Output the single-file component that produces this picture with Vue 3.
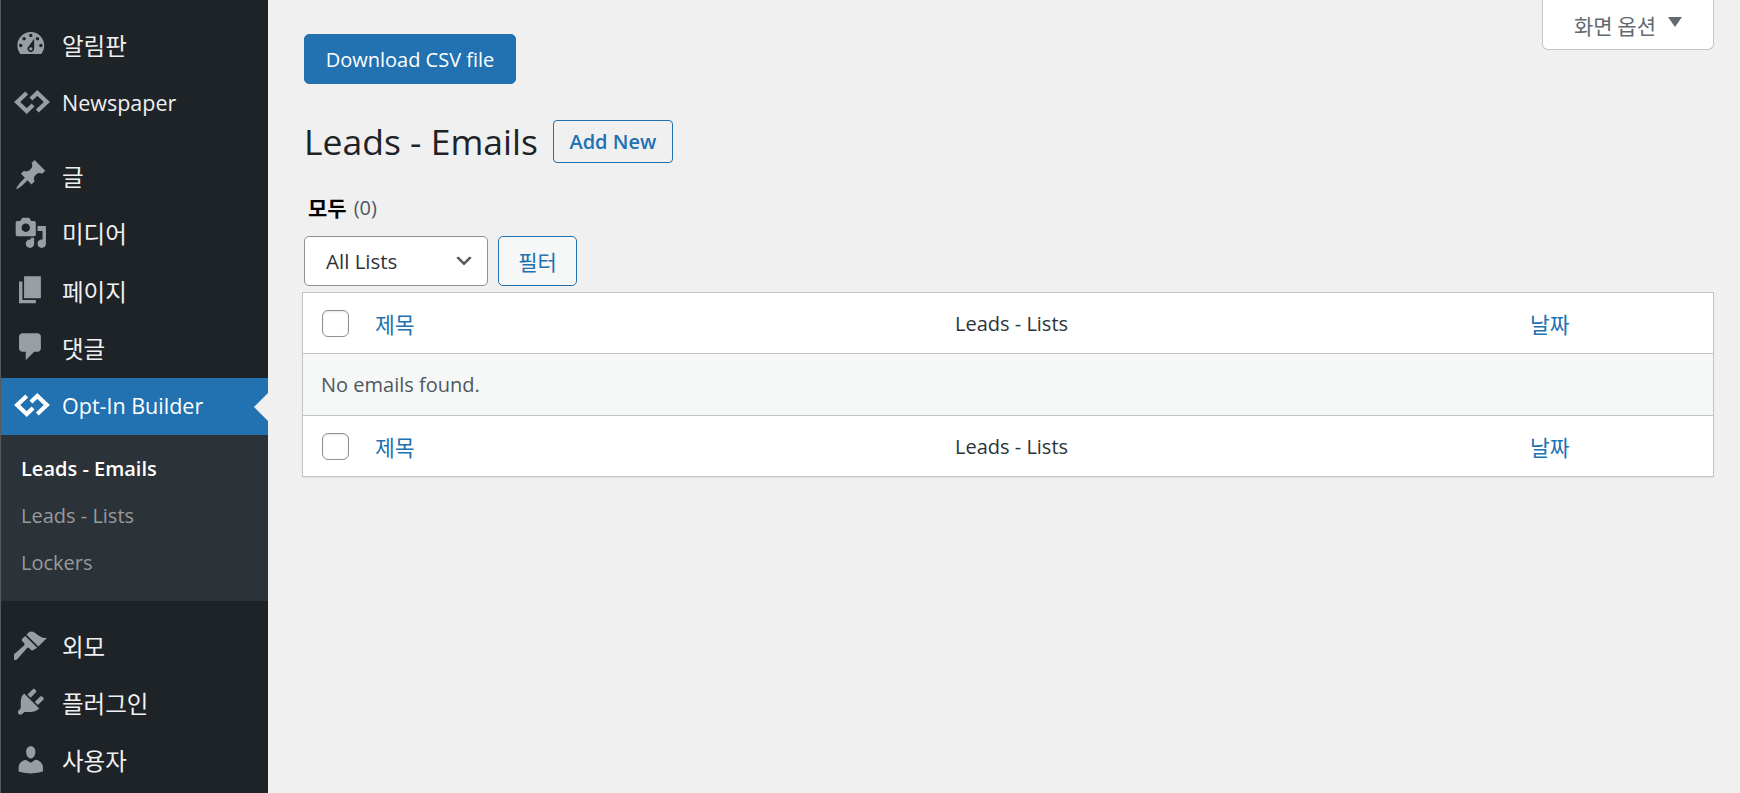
<template>
  <div class="page">
    <aside class="side">
      <ul class="menu">
        <li v-for="item in menuTop" :key="item.label" class="menu-item" :class="item.cls">
          <span class="menu-icon">
            <svg v-if="item.logo" viewBox="0 0 34 24" class="logo" aria-hidden="true">
              <path d="M12 3.5 3 12l9 8.500 6-5.700M22 20.500l9-8.500-9-8.500-6 5.700" fill="none" stroke="currentColor" stroke-width="4" stroke-linejoin="miter" />
            </svg>
            <svg v-else viewBox="0 0 20 20" class="dash" aria-hidden="true">
              <path :d="item.icon" fill="currentColor" fill-rule="evenodd" />
            </svg>
          </span>
          <span class="menu-label" :class="{ ko: item.ko }">{{ item.label }}</span>
        </li>
      </ul>
      <ul class="submenu">
        <li class="sub-item current">Leads - Emails</li>
        <li class="sub-item">Leads - Lists</li>
        <li class="sub-item">Lockers</li>
      </ul>
      <ul class="menu">
        <li v-for="item in menuBottom" :key="item.label" class="menu-item">
          <span class="menu-icon">
            <svg viewBox="0 0 20 20" class="dash" aria-hidden="true">
              <path :d="item.icon" fill="currentColor" fill-rule="evenodd" />
            </svg>
          </span>
          <span class="menu-label ko">{{ item.label }}</span>
        </li>
      </ul>
    </aside>

    <main class="main">
      <div class="screen-opts">
        <span class="ko">화면 옵션</span>
        <i class="tri"></i>
      </div>

      <button class="btn-primary">Download CSV file</button>

      <div class="head">
        <h1>Leads - Emails</h1>
        <a class="add-new">Add New</a>
      </div>

      <div class="subsub"><b class="ko">모두</b> <span>(0)</span></div>

      <div class="filters">
        <div class="select">
          <span>All Lists</span>
          <svg viewBox="0 0 20 20" class="chev" aria-hidden="true">
            <path d="M5 6l5 5 5-5 2 1-7 7-7-7z" fill="currentColor" />
          </svg>
        </div>
        <button class="btn-filter ko">필터</button>
      </div>

      <div class="table">
        <div class="row">
          <span class="col-check"><i class="check"></i></span>
          <a class="col-title ko">제목</a>
          <span class="col-list">Leads - Lists</span>
          <a class="col-date ko">날짜</a>
        </div>
        <div class="row empty">No emails found.</div>
        <div class="row">
          <span class="col-check"><i class="check"></i></span>
          <a class="col-title ko">제목</a>
          <span class="col-list">Leads - Lists</span>
          <a class="col-date ko">날짜</a>
        </div>
      </div>
    </main>
  </div>
</template>

<script setup>
const menuTop = [
  {
    label: '알림판',
    ko: true,
    cls: 'first',
    icon: 'M3.76 16h12.48c1.1-1.37 1.76-3.11 1.76-5 0-4.42-3.58-8-8-8s-8 3.58-8 8c0 1.89.66 3.63 1.76 5zM10 4c.55 0 1 .45 1 1s-.45 1-1 1-1-.45-1-1 .45-1 1-1zM6 6c.55 0 1 .45 1 1s-.45 1-1 1-1-.45-1-1 .45-1 1-1zm8 0c.55 0 1 .45 1 1s-.45 1-1 1-1-.45-1-1 .45-1 1-1zm-5.370 5.550L12 7v6c0 1.100-.9 2-2 2s-2-.9-2-2c0-.57.24-1.080.63-1.450zM4 10c.55 0 1 .45 1 1s-.45 1-1 1-1-.45-1-1 .45-1 1-1zm12 0c.55 0 1 .45 1 1s-.45 1-1 1-1-.45-1-1 .45-1 1-1zm-5 3c0-.55-.45-1-1-1s-1 .45-1 1 .45 1 1 1 1-.45 1-1z',
  },
  { label: 'Newspaper', logo: true, cls: 'gap-after' },
  {
    label: '글',
    ko: true,
    icon: 'M10.440 3.020l1.820-1.820 6.360 6.350-1.830 1.820c-1.050-.68-2.480-.57-3.410.36l-.75.75c-.92.93-1.040 2.350-.35 3.410l-1.830 1.820-2.410-2.410-2.800 2.790c-.42.42-3.380 2.710-3.800 2.290s1.860-3.390 2.280-3.810l2.790-2.790L4.100 9.360l1.830-1.820c1.050.69 2.480.57 3.400-.36l.75-.75c.93-.92 1.050-2.350.36-3.410z',
  },
  {
    label: '미디어',
    ko: true,
    icon: 'M13 11V4c0-.55-.45-1-1-1h-1.670L9 1H5L3.670 3H2c-.55 0-1 .45-1 1v7c0 .55.45 1 1 1h10c.55 0 1-.45 1-1zM7 4.500c1.380 0 2.500 1.120 2.500 2.500S8.380 9.500 7 9.500 4.500 8.380 4.500 7 5.620 4.500 7 4.500zM14 6h5v10.500c0 1.380-1.120 2.500-2.500 2.500S14 17.880 14 16.500s1.120-2.500 2.500-2.500c.17 0 .34.02.5.05V9h-3V6zm-4 8.050V13h2v3.500c0 1.380-1.120 2.500-2.500 2.500S7 17.880 7 16.500 8.120 14 9.500 14c.17 0 .34.02.5.05z',
  },
  { label: '페이지', ko: true, icon: 'M6 15V2h10v13H6zm-1 1h8v2H3V5h2v11z' },
  {
    label: '댓글',
    ko: true,
    icon: 'M5 2h9c1.100 0 2 .9 2 2v7c0 1.100-.9 2-2 2h-2l-5 5v-5H5c-1.100 0-2-.9-2-2V4c0-1.100.9-2 2-2z',
  },
  { label: 'Opt-In Builder', logo: true, cls: 'active' },
]

const menuBottom = [
  {
    label: '외모',
    icon: 'M14.480 11.060L7.410 3.990l1.500-1.500c.5-.56 2.300-.47 3.510.32 1.210.8 1.430 1.280 2.910 2.100 1.180.64 2.450 1.260 4.450.85zm-.71.71L6.700 4.700 4.930 6.470c-.39.39-.39 1.020 0 1.410l1.060 1.060c.39.39.39 1.030 0 1.420-.6.6-6.480 5.630-6.480 5.630-.7.7-.7 1.830 0 2.520.7.7 1.830.7 2.520 0 0 0 5.030-5.880 5.630-6.480.39-.39 1.030-.39 1.420 0l1.060 1.060c.39.39 1.020.39 1.410 0z',
  },
  {
    label: '플러그인',
    icon: 'M13.110 4.360L9.870 7.600 8 5.730l3.240-3.240c.35-.34 1.050-.2 1.560.32.52.51.66 1.210.31 1.550zm-8 1.770l.91-1.120 9.010 9.010-1.190.84c-.71.71-2.630 1.160-3.820 1.160H6.140L4.900 17.260c-.59.59-1.540.59-2.120 0-.59-.58-.59-1.530 0-2.120l1.240-1.240v-3.880c0-1.130.4-3.190 1.090-3.890zm7.260 3.970l3.240-3.240c.34-.35 1.040-.21 1.550.31.52.51.66 1.210.31 1.550l-3.240 3.250z',
  },
  {
    label: '사용자',
    icon: 'M10 9.250c-2.270 0-2.730-3.440-2.730-3.440C7 4.020 7.820 2 9.970 2c2.160 0 2.980 2.020 2.710 3.810 0 0-.41 3.440-2.680 3.440zm0 2.570L12.720 10c2.390 0 4.520 2.330 4.520 4.530v2.490s-3.650 1.130-7.240 1.130c-3.650 0-7.240-1.130-7.240-1.130v-2.490c0-2.250 1.940-4.480 4.470-4.480z',
  },
]
</script>

<style>
body { background: #f0f0f1; overflow: hidden; }
</style>

<style scoped>
.page {
  display: flex;
  height: 793px;
  overflow: hidden;
  background: #f0f0f1;
  font-family: "Open Sans", "Noto Sans CJK KR", sans-serif;
  color: #1d2327;
}

ul { list-style: none; margin: 0; padding: 0; }

.ko { font-family: "Noto Sans CJK KR", sans-serif; }

/* sidebar */
.side {
  width: 268px;
  flex: none;
  background: #1d2327;
  border-left: 1px solid #55595c;
  box-sizing: border-box;
  padding-top: 18px;
}

.menu-item {
  display: flex;
  align-items: center;
  height: 57.400px;
  color: #f0f0f1;
  font-size: 21.500px;
  position: relative;
}

.menu-item.gap-after { margin-bottom: 16px; }

.menu-item.active {
  height: 57px;
  background: #2271b1;
  color: #fff;
}

.menu-item.active::after {
  content: "";
  position: absolute;
  right: 0;
  top: 50%;
  margin-top: -14px;
  border: 14px solid transparent;
  border-right-color: #f0f0f1;
  border-left-width: 0;
}

.menu-icon {
  width: 61px;
  flex: none;
  display: flex;
  justify-content: center;
  color: #999ea3;
}

.active .menu-icon { color: #fff; }

.dash { width: 33.600px; height: 33.600px; display: block; margin-left: -1px; margin-top: -5px; }
.logo { width: 36px; height: 26px; display: block; margin-top: -4px; }

.menu-label { white-space: nowrap; margin-top: -3px; }
.menu-label.ko { font-size: 23.500px; }

.submenu {
  background: #2c3338;
  padding: 10px 0 10px;
  height: 166px;
  box-sizing: border-box;
  margin-bottom: 17px;
}

.sub-item {
  height: 47px;
  display: flex;
  align-items: center;
  padding-left: 20px;
  font-size: 20px;
  color: #c3c4c7b8;
}

.sub-item.current { color: #fff; font-weight: 600; }

/* main */
.main {
  flex: 1;
  min-width: 0;
  padding: 34px 26px 0 36px;
}

.screen-opts {
  float: right;
  margin-top: -34px;
  width: 172px;
  height: 50px;
  box-sizing: border-box;
  background: #fff;
  border: 1px solid #c3c4c7;
  border-top: 0;
  border-radius: 0 0 6px 6px;
  display: flex;
  align-items: center;
  justify-content: center;
  gap: 12px;
  color: #646970;
  font-size: 21px;
}

.tri {
  width: 0;
  height: 0;
  border: 7px solid transparent;
  border-top: 10px solid #646970;
  border-bottom: 0;
  margin-top: -6px;
}

.btn-primary {
  display: block;
  margin-left: -5px;
  width: 212px;
  height: 50px;
  padding: 0;
  background: #2271b1;
  border: 1px solid #2271b1;
  border-radius: 5px;
  color: #fff;
  font: 400 20px "Open Sans", sans-serif;
}

.head {
  display: flex;
  align-items: center;
  gap: 15px;
  margin-top: 36px;
}

h1 {
  margin: 0;
  font-size: 35.500px;
  font-weight: 400;
  line-height: 43px;
  white-space: nowrap;
  color: #1d2327;
}

.add-new {
  width: 120px;
  height: 43px;
  box-sizing: border-box;
  border: 1px solid #2271b1;
  border-radius: 4px;
  display: flex;
  align-items: center;
  justify-content: center;
  color: #2271b1;
  font-size: 20px;
  font-weight: 600;
}

.subsub {
  margin: 28px 0 0 4px;
  height: 32px;
  display: flex;
  align-items: center;
  gap: 7px;
  font-size: 20px;
  color: #50575e;
}

.subsub b { color: #000; font-weight: 600; font-size: 21px; }

.filters {
  display: flex;
  gap: 10px;
  margin-top: 13px;
}

.select {
  width: 184px;
  height: 50px;
  box-sizing: border-box;
  background: #fff;
  border: 1px solid #8c8f94;
  border-radius: 5px;
  display: flex;
  align-items: center;
  justify-content: space-between;
  padding: 0 12px 0 21px;
  font-size: 20.500px;
  color: #2c3338;
}

.chev { width: 22px; height: 22px; color: #50575e; }

.btn-filter {
  width: 79px;
  height: 50px;
  padding: 0;
  background: #f6f7f7;
  border: 1px solid #2271b1;
  border-radius: 5px;
  color: #2271b1;
  font-size: 21px;
}

.table {
  margin: 6px 0 0 -2px;
  background: #fff;
  border: 1px solid #c3c4c7;
  box-shadow: 0 1px 1px rgba(0, 0, 0, 0.04);
}

.row {
  height: 60px;
  display: flex;
  align-items: center;
  font-size: 20px;
  color: #2c3338;
}

.row.empty {
  height: 61px;
  box-sizing: content-box;
  background: #f6f7f7;
  border-top: 1px solid #c3c4c7;
  border-bottom: 1px solid #c3c4c7;
  padding-left: 18px;
  color: #50575e;
}

.col-check { width: 72px; flex: none; padding-left: 19px; box-sizing: border-box; display: flex; }

.check {
  width: 27px;
  height: 27px;
  box-sizing: border-box;
  background: #fff;
  border: 1px solid #8c8f94;
  border-radius: 6px;
  box-shadow: inset 0 1px 2px rgba(0, 0, 0, 0.1);
}

.col-title { width: 580px; flex: none; color: #2271b1; font-size: 21.500px; }
.col-list { width: 575px; flex: none; }
.col-date { color: #2271b1; font-size: 21.500px; }
</style>
